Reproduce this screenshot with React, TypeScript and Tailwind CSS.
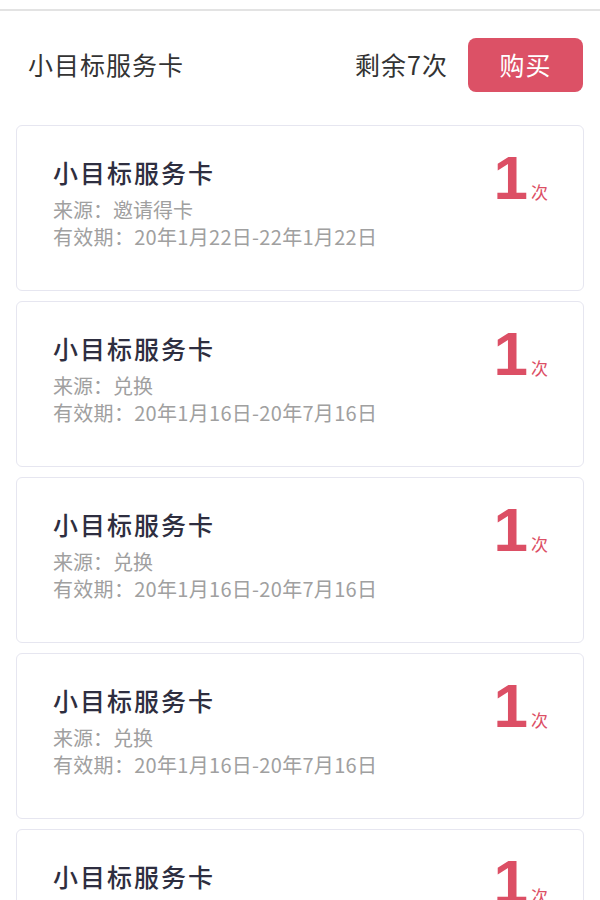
import React from 'react';

interface CardItem {
  title: string;
  source: string;
  validity: string;
  count: number;
}

const cards: CardItem[] = [
  { title: '小目标服务卡', source: '邀请得卡', validity: '20年1月22日-22年1月22日', count: 1 },
  { title: '小目标服务卡', source: '兑换', validity: '20年1月16日-20年7月16日', count: 1 },
  { title: '小目标服务卡', source: '兑换', validity: '20年1月16日-20年7月16日', count: 1 },
  { title: '小目标服务卡', source: '兑换', validity: '20年1月16日-20年7月16日', count: 1 },
  { title: '小目标服务卡', source: '兑换', validity: '20年1月16日-20年7月16日', count: 1 },
];

const font = { fontFamily: '"Noto Sans CJK SC", "Noto Sans", sans-serif' };

function ServiceCard({ card }: { card: CardItem }) {
  return (
    <div className="flex h-[166px] shrink-0 justify-between rounded-[6px] border border-[#e6e6f0] bg-white pl-[36px] pr-[35px]">
      <div className="flex flex-col pt-[30px]">
        <div className="text-[25px] leading-[32px] font-medium tracking-[2px] text-[#2e2e40]">
          {card.title}
        </div>
        <div className="mt-[8px] text-[20px] leading-[27px] text-[#a0a0a0]">
          来源：{card.source}
        </div>
        <div className="text-[20px] leading-[27px] tracking-[0.3px] text-[#a0a0a0]">
          有效期：{card.validity}
        </div>
      </div>
      <div className="flex items-baseline pt-[21px] text-[#dc4f65]">
        <span className="font-['Liberation_Sans',Arial,sans-serif] text-[62px] leading-none font-bold">
          {card.count}
        </span>
        <span className="ml-[3px] text-[17px] leading-none">次</span>
      </div>
    </div>
  );
}

export default function App() {
  return (
    <div className="h-[900px] w-[600px] overflow-hidden bg-white" style={font}>
      <div className="h-[9px]" />
      <div className="h-[2px] bg-[#e3e3e3]" />
      <div className="flex h-[114px] items-center pl-[28px] pr-[17px] pb-[6px]">
        <div className="flex-1 text-[25px] tracking-[1px] text-[#333333]">小目标服务卡</div>
        <div className="text-[25px] tracking-[1px] text-[#333333]">剩余7次</div>
        <button className="ml-[20px] flex h-[54px] w-[115px] items-center justify-center rounded-[8px] bg-[#dc5166] text-[25px] tracking-[1px] text-white">
          购买
        </button>
      </div>
      <div className="flex flex-col gap-[10px] px-[16px]">
        {cards.map((card, i) => (
          <ServiceCard key={i} card={card} />
        ))}
      </div>
    </div>
  );
}
